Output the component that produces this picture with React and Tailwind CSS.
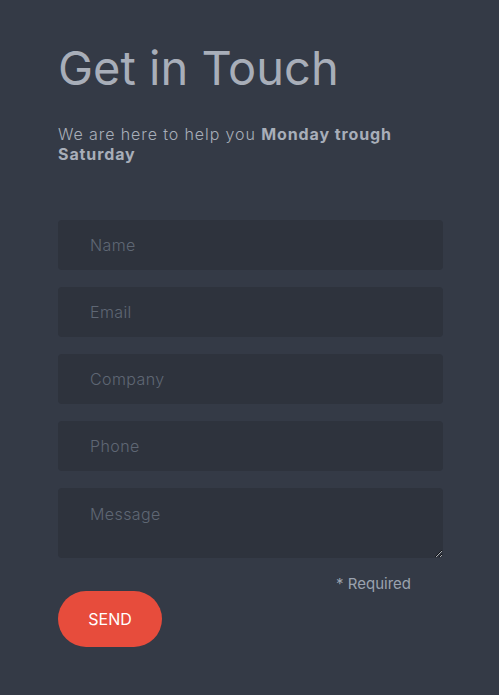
export default function App() {
  const fields = ['Name', 'Email', 'Company', 'Phone'];
  return (
    <div className="min-h-[695px] w-full bg-[#343a46] font-['Inter',sans-serif]">
      <div className="px-[58px] pt-[40px] w-[499px]">
        <h1 className="text-[47px] leading-[56px] font-normal text-[#a8aeb9]">Get in Touch</h1>
        <p className="mt-[28px] text-[16px] leading-[20px] font-light tracking-[0.9px] text-[#a8aeb9] w-[370px]">
          We are here to help you <span className="font-bold">Monday trough Saturday</span>
        </p>
        <form className="mt-[56px] flex flex-col gap-[17px]" onSubmit={e => e.preventDefault()}>
          {fields.map(f => (
            <input
              key={f}
              placeholder={f}
              className="h-[50px] w-[385px] rounded-[4px] bg-[#2e333d] pl-[32px] text-[16px] font-light tracking-[0.4px] text-[#a8aeb9] placeholder:text-[#5f6774] outline-none"
            />
          ))}
          <textarea
            placeholder="Message"
            className="h-[70px] w-[385px] rounded-[4px] bg-[#2e333d] pl-[32px] pt-[14px] text-[16px] font-light tracking-[0.4px] text-[#a8aeb9] placeholder:text-[#5f6774] outline-none"
          />
        </form>
        <div className="w-[353px] text-right mt-[16px] text-[15px] leading-[20px] text-[#9aa2af]">* Required</div>
        <button className="mt-[-3px] h-[56px] w-[104px] rounded-full bg-[#e74c3c] text-[16px] text-white">SEND</button>
      </div>
    </div>
  );
}
